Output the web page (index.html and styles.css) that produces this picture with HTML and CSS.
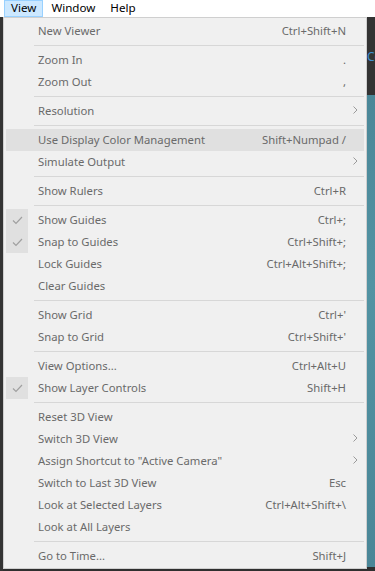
FILE: index.html
```html
<!DOCTYPE html>
<html>
<head>
<meta charset="utf-8">
<link rel="stylesheet" href="styles.css">
</head>
<body>
<div class="menubar">
  <span class="mb-item active">View</span>
  <span class="mb-item">Window</span>
  <span class="mb-item">Help</span>
</div>
<div class="workspace">
  <div class="left-strip"></div>
  <div class="menu">
    <div class="row"><span class="chk"></span><span class="label">New Viewer</span><span class="sc">Ctrl+Shift+N</span><span class="arr"></span></div>
    <div class="sep"></div>
    <div class="row"><span class="chk"></span><span class="label">Zoom In</span><span class="sc">.</span><span class="arr"></span></div>
    <div class="row"><span class="chk"></span><span class="label">Zoom Out</span><span class="sc">,</span><span class="arr"></span></div>
    <div class="sep"></div>
    <div class="row"><span class="chk"></span><span class="label">Resolution</span><span class="sc"></span><span class="arr"><svg width="5" height="8" viewBox="0 0 5 8"><path d="M0.5 0.5 L4 4 L0.5 7.5" fill="none" stroke="#9a9a9a" stroke-width="1"/></svg></span></div>
    <div class="sep"></div>
    <div class="row hover"><span class="chk"></span><span class="label">Use Display Color Management</span><span class="sc">Shift+Numpad /</span><span class="arr"></span></div>
    <div class="row"><span class="chk"></span><span class="label">Simulate Output</span><span class="sc"></span><span class="arr"><svg width="5" height="8" viewBox="0 0 5 8"><path d="M0.5 0.5 L4 4 L0.5 7.5" fill="none" stroke="#9a9a9a" stroke-width="1"/></svg></span></div>
    <div class="sep"></div>
    <div class="row"><span class="chk"></span><span class="label">Show Rulers</span><span class="sc">Ctrl+R</span><span class="arr"></span></div>
    <div class="sep"></div>
    <div class="row"><span class="chk on"><svg width="11" height="9" viewBox="0 0 11 9"><path d="M1 4.5 L4 7.5 L10 1" fill="none" stroke="#a0a0a0" stroke-width="1.2"/></svg></span><span class="label">Show Guides</span><span class="sc">Ctrl+;</span><span class="arr"></span></div>
    <div class="row"><span class="chk on"><svg width="11" height="9" viewBox="0 0 11 9"><path d="M1 4.5 L4 7.5 L10 1" fill="none" stroke="#a0a0a0" stroke-width="1.2"/></svg></span><span class="label">Snap to Guides</span><span class="sc">Ctrl+Shift+;</span><span class="arr"></span></div>
    <div class="row"><span class="chk"></span><span class="label">Lock Guides</span><span class="sc">Ctrl+Alt+Shift+;</span><span class="arr"></span></div>
    <div class="row"><span class="chk"></span><span class="label">Clear Guides</span><span class="sc"></span><span class="arr"></span></div>
    <div class="sep"></div>
    <div class="row"><span class="chk"></span><span class="label">Show Grid</span><span class="sc">Ctrl+'</span><span class="arr"></span></div>
    <div class="row"><span class="chk"></span><span class="label">Snap to Grid</span><span class="sc">Ctrl+Shift+'</span><span class="arr"></span></div>
    <div class="sep"></div>
    <div class="row"><span class="chk"></span><span class="label">View Options...</span><span class="sc">Ctrl+Alt+U</span><span class="arr"></span></div>
    <div class="row"><span class="chk on"><svg width="11" height="9" viewBox="0 0 11 9"><path d="M1 4.5 L4 7.5 L10 1" fill="none" stroke="#a0a0a0" stroke-width="1.2"/></svg></span><span class="label">Show Layer Controls</span><span class="sc">Shift+H</span><span class="arr"></span></div>
    <div class="sep"></div>
    <div class="row"><span class="chk"></span><span class="label">Reset 3D View</span><span class="sc"></span><span class="arr"></span></div>
    <div class="row"><span class="chk"></span><span class="label">Switch 3D View</span><span class="sc"></span><span class="arr"><svg width="5" height="8" viewBox="0 0 5 8"><path d="M0.5 0.5 L4 4 L0.5 7.5" fill="none" stroke="#9a9a9a" stroke-width="1"/></svg></span></div>
    <div class="row"><span class="chk"></span><span class="label">Assign Shortcut to "Active Camera"</span><span class="sc"></span><span class="arr"><svg width="5" height="8" viewBox="0 0 5 8"><path d="M0.5 0.5 L4 4 L0.5 7.5" fill="none" stroke="#9a9a9a" stroke-width="1"/></svg></span></div>
    <div class="row"><span class="chk"></span><span class="label">Switch to Last 3D View</span><span class="sc">Esc</span><span class="arr"></span></div>
    <div class="row"><span class="chk"></span><span class="label">Look at Selected Layers</span><span class="sc">Ctrl+Alt+Shift+\</span><span class="arr"></span></div>
    <div class="row"><span class="chk"></span><span class="label">Look at All Layers</span><span class="sc"></span><span class="arr"></span></div>
    <div class="sep"></div>
    <div class="row"><span class="chk"></span><span class="label">Go to Time...</span><span class="sc">Shift+J</span><span class="arr"></span></div>
  </div>
  <div class="right-strip">
    <div class="rs-top"><span class="rs-text">Co</span></div>
    <div class="rs-image"></div>
  </div>
</div>
</body>
</html>
```
FILE: styles.css
```css
html, body {
  margin: 0;
  padding: 0;
  width: 375px;
  height: 571px;
  overflow: hidden;
  background: #2f2f2f;
  font-family: "Noto Sans", "DejaVu Sans", sans-serif;
}

.menubar {
  height: 17px;
  background: #ffffff;
  display: flex;
  align-items: stretch;
  padding-left: 4px;
  font-size: 11.6px;
  color: #000;
}

.mb-item {
  display: flex;
  align-items: center;
  padding: 0 6px 1px;
  border: 1px solid transparent;
  margin-right: 1px;
  line-height: 14px;
}

.mb-item.active {
  background: #cce8ff;
  border-color: #99d1ff;
}

.workspace {
  display: flex;
  height: 554px;
}

.left-strip {
  width: 3px;
  flex: none;
  background: #343434;
}

.menu {
  flex: none;
  width: 358px;
  height: 548px;
  background: #f0f0f0;
  border: 1px solid #cfcfcf;
  padding: 2px 2px 0 2px;
  font-size: 11.3px;
  color: #6a6a6a;
}

.row {
  display: flex;
  align-items: center;
  height: 22px;
  box-sizing: border-box;
  padding-bottom: 2px;
}

.row.hover {
  background: #e0e0e0;
}

.chk {
  width: 22px;
  height: 22px;
  margin-bottom: -2px;
  display: flex;
  align-items: center;
  justify-content: center;
  flex: none;
}

.chk.on {
  background: #e0e0e0;
}

.label {
  margin-left: 10px;
  flex: 1;
  white-space: nowrap;
}

.sc {
  white-space: nowrap;
  text-align: right;
}

.arr {
  width: 18px;
  flex: none;
  display: flex;
  justify-content: center;
  align-items: center;
}

.sep {
  height: 1px;
  margin: 3px 0 3px 28px;
  background: #d7d7d7;
}

.right-strip {
  flex: 1;
  min-width: 0;
  overflow: hidden;
  display: flex;
  flex-direction: column;
  padding-bottom: 4px;
}

.rs-top {
  height: 78px;
  flex: none;
  background: #333333;
  display: flex;
  align-items: center;
  font-size: 12px;
}

.rs-text {
  color: #3f8fd0;
  margin-left: 0;
}

.rs-image {
  flex: 1;
  background: linear-gradient(180deg, #4b8798 0%, #5293a3 40%, #4a8697 100%);
}
```
